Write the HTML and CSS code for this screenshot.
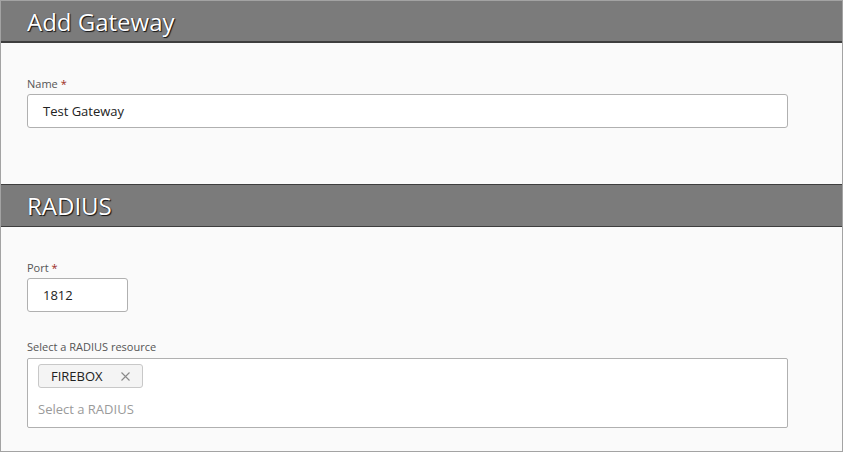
FILE: index.html
```html
<!DOCTYPE html>
<html lang="en">
<head>
<meta charset="utf-8">
<title>Add Gateway</title>
<link rel="stylesheet" href="styles.css">
</head>
<body>
<div class="frame">
  <div class="header header-first"><h1 class="title">Add Gateway</h1></div>
  <div class="section section-first">
    <div class="label">Name <span class="req">*</span></div>
    <div class="field field-wide">Test Gateway</div>
  </div>
  <div class="header header-second"><h1 class="title">RADIUS</h1></div>
  <div class="section">
    <div class="label">Port <span class="req">*</span></div>
    <div class="field field-port">1812</div>
    <div class="label label-gap">Select a RADIUS resource</div>
    <div class="multi">
      <div class="chips">
        <span class="chip">FIREBOX
          <svg class="chip-x" width="9" height="9" viewBox="0 0 9 9"><path d="M0.5 0.5 L8.5 8.5 M8.5 0.5 L0.5 8.5" stroke="#8a8a8a" stroke-width="1.1" fill="none"/></svg>
        </span>
      </div>
      <div class="placeholder">Select a RADIUS</div>
    </div>
  </div>
</div>
</body>
</html>
```

FILE: styles.css
```css
html, body {
  margin: 0;
  padding: 0;
  background: #fafafa;
}
body {
  font-family: "Open Sans", "Noto Sans", sans-serif;
}
.frame {
  width: 843px;
  height: 452px;
  box-sizing: border-box;
  border: 1px solid #a3a3a3;
  background: #fafafa;
  display: flex;
  flex-direction: column;
  overflow: hidden;
}
.header {
  background: #7b7b7b;
  display: flex;
  align-items: center;
  padding-left: 26px;
  box-sizing: border-box;
}
.header-first {
  height: 42px;
  border-bottom: 2px solid #3e3e3e;
}
.header-second {
  height: 43px;
  border-top: 1px solid #3e3e3e;
  border-bottom: 1px solid #3e3e3e;
}
.title {
  margin: 0;
  font-size: 24px;
  font-weight: 400;
  line-height: 32px;
  color: #ffffff;
  text-shadow: 1px 1px 1px rgba(0, 0, 0, 0.85), 0 0 1px rgba(0, 0, 40, 0.6);
}
.header-first .title {
  margin-top: 1px;
}
.section {
  padding: 33px 0 0 26px;
  display: flex;
  flex-direction: column;
  align-items: flex-start;
  flex: 1;
}
.section-first {
  flex: 0 0 141px;
  box-sizing: border-box;
}
.label {
  font-size: 11px;
  line-height: 15px;
  color: #555555;
  margin-bottom: 3px;
}
.label-gap {
  margin-top: 27px;
  margin-bottom: 4px;
}
.req {
  color: #9b2a1c;
}
.field {
  height: 34px;
  box-sizing: border-box;
  border: 1px solid #b0b0b0;
  border-radius: 3px;
  background: #ffffff;
  padding-left: 15px;
  font-size: 13px;
  line-height: 32px;
  color: #222222;
}
.field-wide {
  width: 761px;
}
.field-port {
  width: 101px;
}
.multi {
  width: 761px;
  height: 70px;
  box-sizing: border-box;
  border: 1px solid #b0b0b0;
  border-radius: 2px;
  background: #ffffff;
  padding: 5px 0 0 10px;
}
.chips {
  display: flex;
}
.chip {
  display: inline-flex;
  align-items: center;
  height: 24px;
  width: 105px;
  box-sizing: border-box;
  border: 1px solid #c8c8c8;
  border-radius: 3px;
  background: #f4f4f4;
  padding-left: 12px;
  font-size: 13px;
  color: #222222;
}
.chip-x {
  margin-left: 18px;
}
.placeholder {
  margin-top: 12px;
  font-size: 13px;
  line-height: 18px;
  color: #9a9a9a;
}
```
